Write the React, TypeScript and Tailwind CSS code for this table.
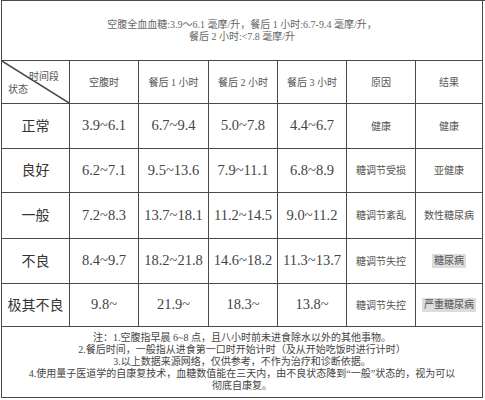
import React from 'react';

const serif = "font-['Liberation_Serif','Noto_Sans_CJK_SC',serif]";

type Row = {
  label: string;
  values: string[];
  cause: string;
  result: string;
  mark?: boolean;
  h: string;
};

const rows: Row[] = [
  { label: '正常', values: ['3.9~6.1', '6.7~9.4', '5.0~7.8', '4.4~6.7'], cause: '健康', result: '健康', h: 'h-[45px]' },
  { label: '良好', values: ['6.2~7.1', '9.5~13.6', '7.9~11.1', '6.8~8.9'], cause: '糖调节受损', result: '亚健康', h: 'h-[44px]' },
  { label: '一般', values: ['7.2~8.3', '13.7~18.1', '11.2~14.5', '9.0~11.2'], cause: '糖调节紊乱', result: '数性糖尿病', h: 'h-[46px]' },
  { label: '不良', values: ['8.4~9.7', '18.2~21.8', '14.6~18.2', '11.3~13.7'], cause: '糖调节失控', result: '糖尿病', mark: true, h: 'h-[45px]' },
  { label: '极其不良', values: ['9.8~', '21.9~', '18.3~', '13.8~'], cause: '糖调节失控', result: '严重糖尿病', mark: true, h: 'h-[43px]' },
];

const headers = ['空腹时', '餐后 1 小时', '餐后 2 小时', '餐后 3 小时', '原因', '结果'];

const cell = 'border-r border-b border-[#4a4a4a] flex items-center justify-center';

export default function App() {
  return (
    <div className={`w-[485px] h-[400px] bg-white ${serif}`}>
      <div className="ml-[1px] grid grid-cols-[68px_69px_70px_69px_69px_69px_67px] border-l border-t border-[#4a4a4a]">
        <div className={`${cell} col-span-7 h-[60px] flex-col text-[10px] leading-[12px] text-[#666]`}>
          <span>空腹全血血糖:3.9～6.1 毫摩/升，餐后 1 小时:6.7-9.4 毫摩/升，</span>
          <span>餐后 2 小时:&lt;7.8 毫摩/升</span>
        </div>

        <div className={`${cell} relative h-[43px] text-[10px] text-[#555]`}>
          <svg className="absolute inset-0 w-full h-full" preserveAspectRatio="none" viewBox="0 0 100 100">
            <line x1="0" y1="0" x2="100" y2="100" stroke="#4a4a4a" strokeWidth="1.5" vectorEffect="non-scaling-stroke" />
          </svg>
          <span className="absolute left-[27px] top-[8px]">时间段</span>
          <span className="absolute left-[6px] top-[21px]">状态</span>
        </div>
        {headers.map((t) => (
          <div key={t} className={`${cell} h-[43px] text-[10px] text-[#555]`}>
            {t}
          </div>
        ))}

        {rows.map((r) => (
          <React.Fragment key={r.label}>
            <div className={`${cell} ${r.h} text-[14px] text-[#333]`}>{r.label}</div>
            {r.values.map((v, i) => (
              <div key={i} className={`${cell} ${r.h} text-[14.5px] text-[#444]`}>
                {v}
              </div>
            ))}
            <div className={`${cell} ${r.h} text-[10px] text-[#555]`}>{r.cause}</div>
            <div className={`${cell} ${r.h} text-[10px] text-[#555]`}>
              <span className={r.mark ? 'bg-[#dcdcdc] px-[2px] py-[1px] leading-[12px]' : ''}>{r.result}</span>
            </div>
          </React.Fragment>
        ))}

        <div className={`${cell} col-span-7 h-[71px] flex-col text-[10px] leading-[12px] text-[#444]`}>
          <span>注：1.空腹指早晨 6~8 点，且八小时前未进食除水以外的其他事物。</span>
          <span>2.餐后时间，一般指从进食第一口时开始计时（及从开始吃饭时进行计时）</span>
          <span>3.以上数据来源网络，仅供参考，不作为治疗和诊断依据。</span>
          <span>4.使用量子医道学的自康复技术，血糖数值能在三天内，由不良状态降到“一般”状态的，视为可以</span>
          <span>彻底自康复。</span>
        </div>
      </div>
    </div>
  );
}
